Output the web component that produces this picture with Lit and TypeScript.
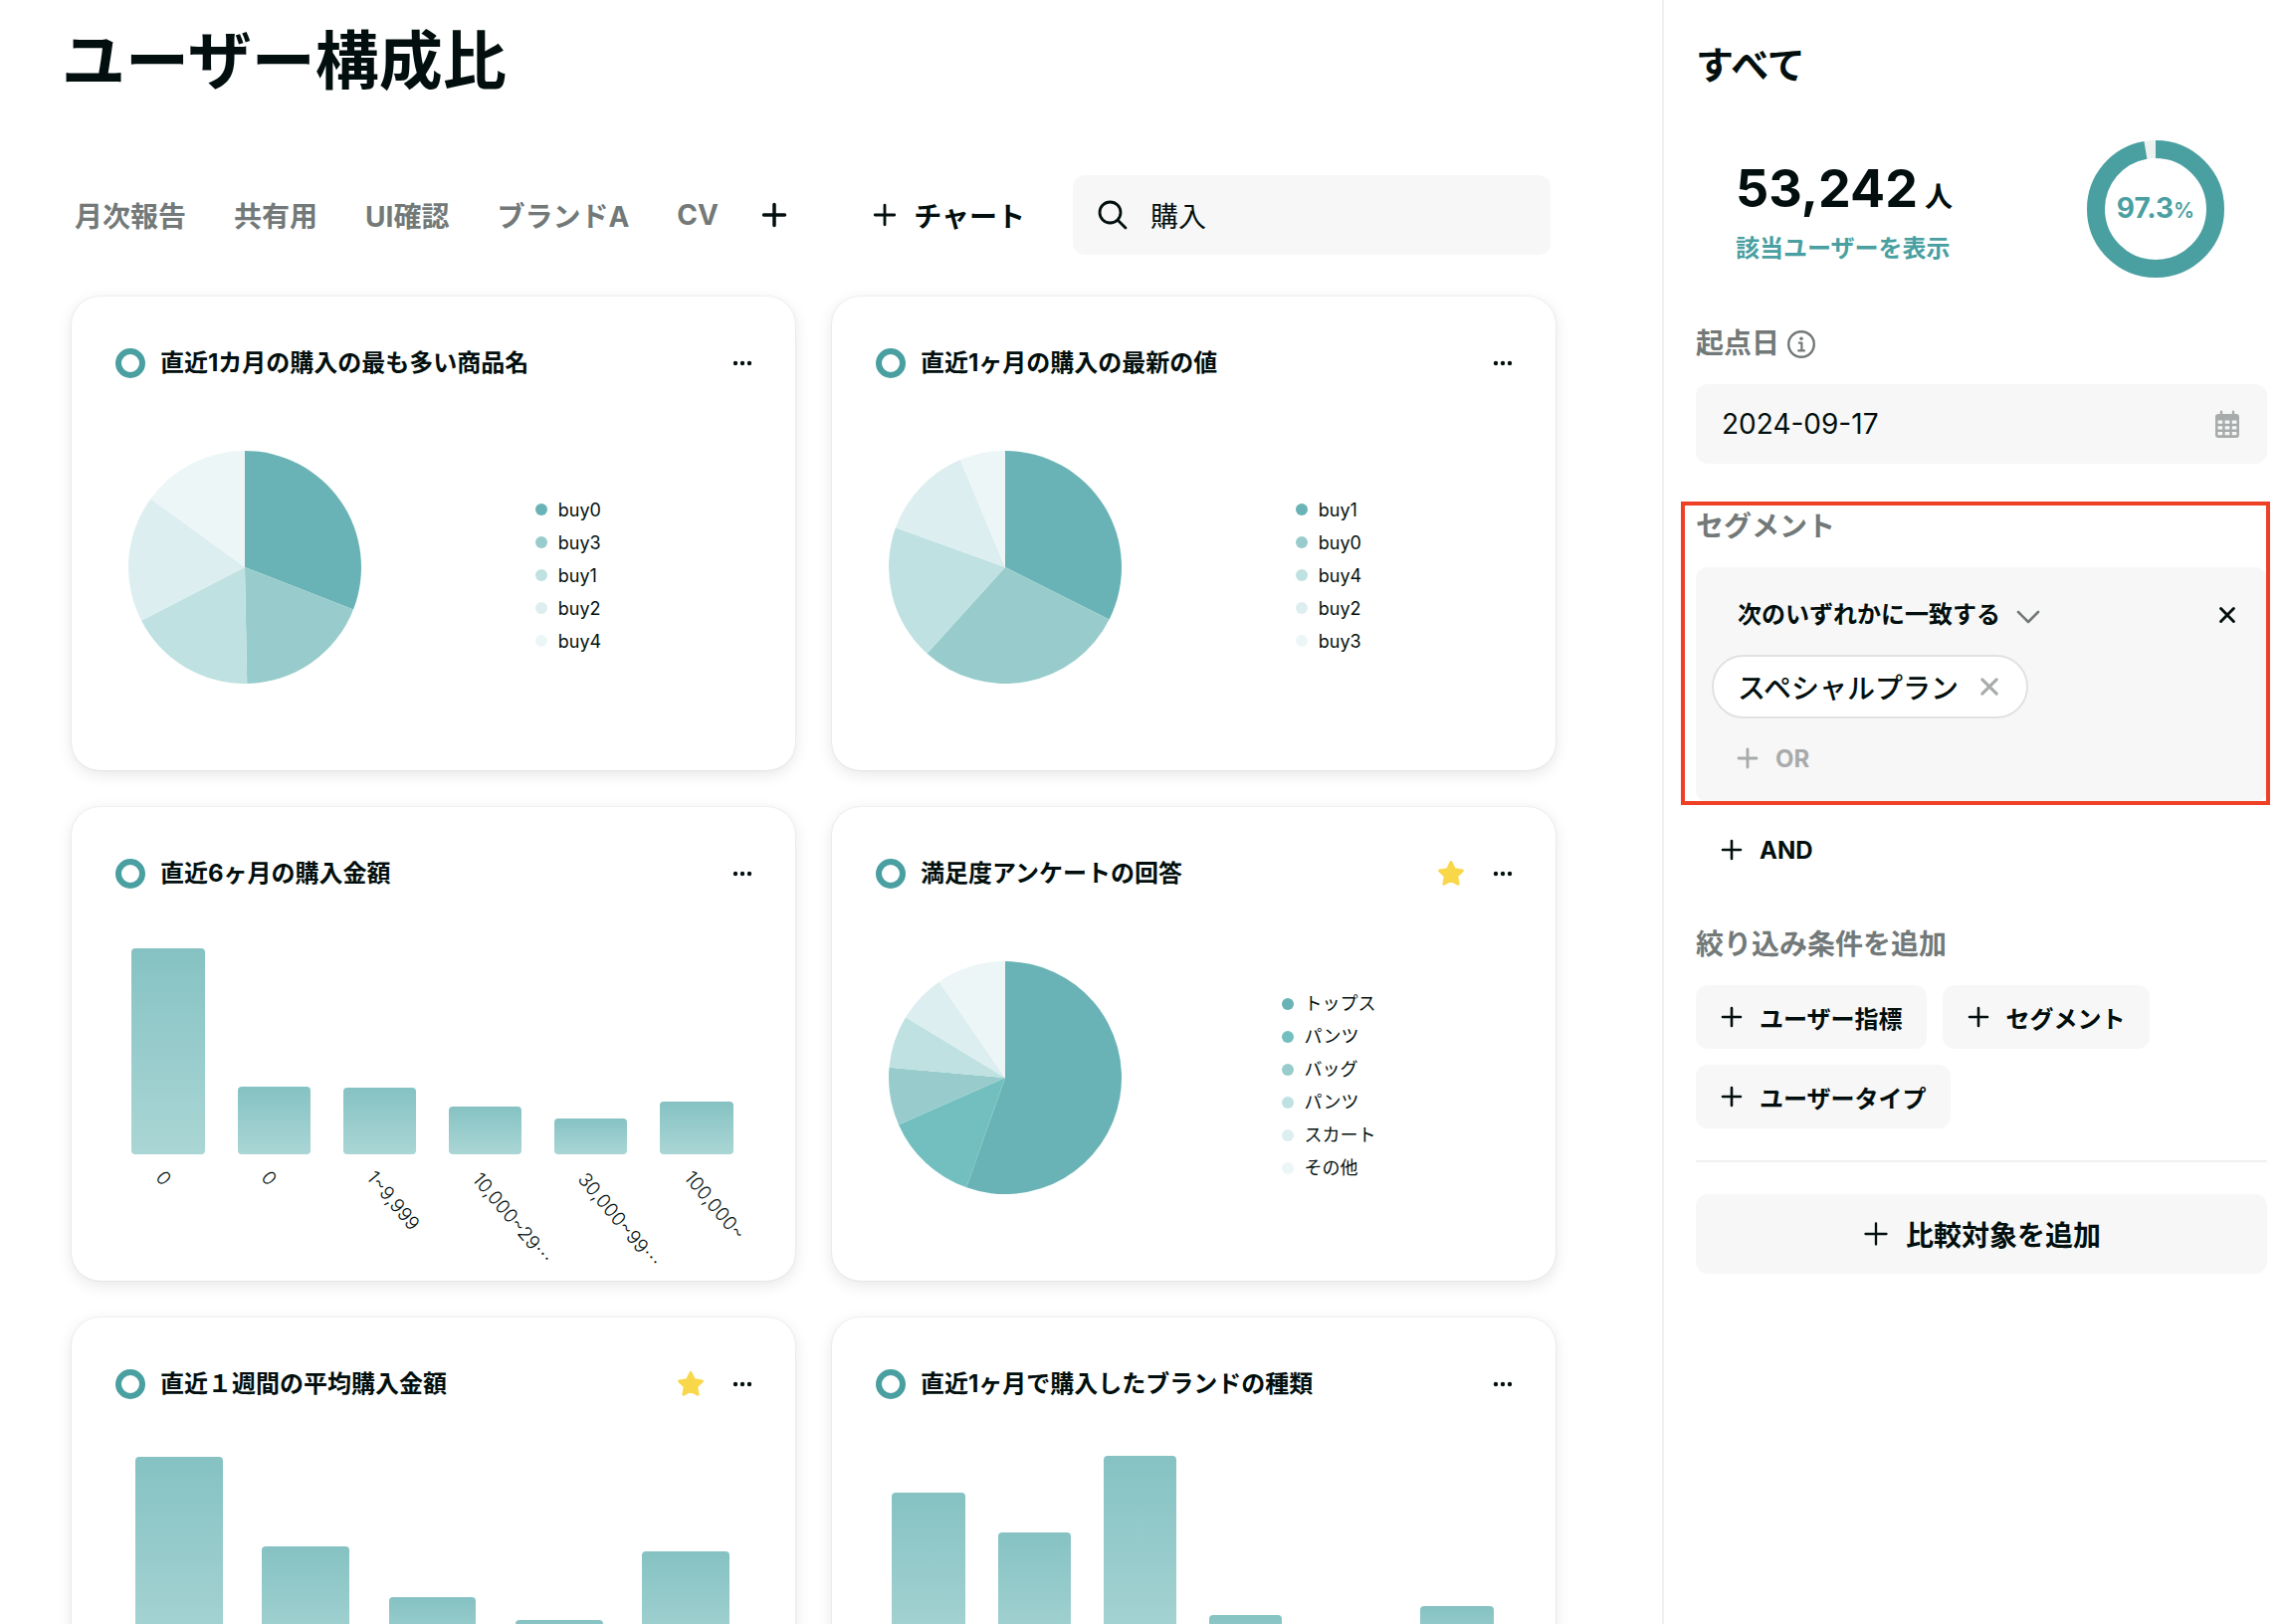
import { LitElement, html, svg, css, nothing } from "lit";
import { customElement, property } from "lit/decorators.js";

interface Slice {
  label: string;
  value: number;
  color: string;
}
interface Bar {
  label: string;
  value: number;
}
interface Chart {
  title: string;
  starred?: boolean;
  slices?: Slice[];
  bars?: Bar[];
}

const TEAL = ["#69b3b6", "#98cccc", "#bfe1e1", "#ddeef0", "#ecf6f7"];

const CHARTS: Chart[] = [
  {
    title: "直近1カ月の購入の最も多い商品名",
    slices: [
      { label: "buy0", value: 30.9, color: TEAL[0] },
      { label: "buy3", value: 18.8, color: TEAL[1] },
      { label: "buy1", value: 17.7, color: TEAL[2] },
      { label: "buy2", value: 17.6, color: TEAL[3] },
      { label: "buy4", value: 15, color: TEAL[4] },
    ],
  },
  {
    title: "直近1ヶ月の購入の最新の値",
    slices: [
      { label: "buy1", value: 32.4, color: TEAL[0] },
      { label: "buy0", value: 29.3, color: TEAL[1] },
      { label: "buy4", value: 18.8, color: TEAL[2] },
      { label: "buy2", value: 13.2, color: TEAL[3] },
      { label: "buy3", value: 6.3, color: TEAL[4] },
    ],
  },
  {
    title: "直近6ヶ月の購入金額",
    bars: [
      { label: "0", value: 207 },
      { label: "0", value: 68 },
      { label: "1~9,999", value: 67 },
      { label: "10,000~29…", value: 48 },
      { label: "30,000~99…", value: 36 },
      { label: "100,000~", value: 53 },
    ],
  },
  {
    title: "満足度アンケートの回答",
    starred: true,
    slices: [
      { label: "トップス", value: 55.4, color: TEAL[0] },
      { label: "パンツ", value: 13, color: "#73bfc0" },
      { label: "バッグ", value: 8, color: TEAL[1] },
      { label: "パンツ", value: 7.3, color: TEAL[2] },
      { label: "スカート", value: 6.7, color: TEAL[3] },
      { label: "その他", value: 9.6, color: TEAL[4] },
    ],
  },
  {
    title: "直近１週間の平均購入金額",
    starred: true,
    bars: [
      { label: "", value: 209 },
      { label: "", value: 119 },
      { label: "", value: 68 },
      { label: "", value: 45 },
      { label: "", value: 114 },
    ],
  },
  {
    title: "直近1ヶ月で購入したブランドの種類",
    bars: [
      { label: "", value: 173 },
      { label: "", value: 133 },
      { label: "", value: 210 },
      { label: "", value: 50 },
      { label: "", value: 30 },
      { label: "", value: 59 },
    ],
  },
];

const base = css`
  :host {
    box-sizing: border-box;
    font-family: Inter, "Noto Sans CJK JP", sans-serif;
    color: #020f0e;
  }
  *,
  *::before,
  *::after {
    box-sizing: border-box;
  }
  h1,
  h2,
  p,
  ul {
    margin: 0;
    padding: 0;
    list-style: none;
  }
  button,
  input,
  select {
    font: inherit;
    color: inherit;
    background: none;
    border: 0;
    margin: 0;
    padding: 0;
    outline: 0;
  }
  button {
    cursor: pointer;
  }
  svg {
    display: block;
    flex: none;
  }
`;

const plus = (size: number, width: number) => html`<svg
  width=${size}
  height=${size}
  viewBox="0 0 24 24"
  fill="none"
  stroke="currentColor"
  stroke-width=${width}
  stroke-linecap="round"
  aria-hidden="true"
>
  <path d="M12 3v18M3 12h18" />
</svg>`;

const cross = (size: number, width: number) => html`<svg
  width=${size}
  height=${size}
  viewBox="0 0 20 20"
  fill="none"
  stroke="currentColor"
  stroke-width=${width}
  stroke-linecap="round"
  aria-hidden="true"
>
  <path d="M2 2l16 16M18 2L2 18" />
</svg>`;

@customElement("pie-chart")
export class PieChart extends LitElement {
  @property({ attribute: false }) slices: Slice[] = [];

  static styles = [
    base,
    css`
      :host {
        display: flex;
        align-items: center;
        padding: 0 20px 0 57px;
      }
      .pie {
        width: 234px;
        height: 234px;
      }
      .legend {
        flex: 1;
        display: flex;
        justify-content: center;
        padding-top: 16px;
      }
      .item {
        display: flex;
        align-items: center;
        gap: 11px;
        font-size: 18px;
        line-height: 33px;
        height: 33px;
      }
      .dot {
        width: 12px;
        height: 12px;
      }
    `,
  ];

  render() {
    let sum = 0;
    const point = (v: number) => {
      const a = (v / 100) * Math.PI * 2;
      return `${(117 + 117 * Math.sin(a)).toFixed(2)} ${(117 - 117 * Math.cos(a)).toFixed(2)}`;
    };
    return html`
      <svg class="pie" viewBox="0 0 234 234" role="img" aria-hidden="true">
        ${this.slices.map((s) => {
          const from = point(sum);
          sum += s.value;
          return svg`<path fill=${s.color}
            d="M117 117L${from}A117 117 0 ${s.value > 50 ? 1 : 0} 1 ${point(sum)}Z"></path>`;
        })}
      </svg>
      <div class="legend">
        <ul>
          ${this.slices.map(
            (s) => html`<li class="item">
              <svg class="dot" viewBox="0 0 12 12" aria-hidden="true">
                <circle cx="6" cy="6" r="6" fill=${s.color} />
              </svg>
              ${s.label}
            </li>`
          )}
        </ul>
      </div>
    `;
  }
}

@customElement("bar-chart")
export class BarChart extends LitElement {
  @property({ attribute: false }) bars: Bar[] = [];

  static styles = [
    base,
    css`
      :host {
        display: flex;
        padding: 0 46px 0 44px;
      }
      .cell {
        flex: 1 1 0;
        min-width: 0;
        display: flex;
        flex-direction: column;
        align-items: center;
      }
      .plot {
        width: 100%;
        height: 210px;
        display: flex;
        align-items: flex-end;
        justify-content: center;
      }
      .bar {
        width: 69%;
        border-radius: 4px;
        background: linear-gradient(#86c2c3, #aad6d5);
      }
      .tick {
        width: 18px;
        height: 110px;
        padding-top: 8px;
      }
      .label {
        display: block;
        width: max-content;
        font-size: 19px;
        font-weight: 300;
        line-height: 24px;
        white-space: nowrap;
        transform: rotate(50deg);
        transform-origin: left center;
      }
      .more {
        font-family: "Noto Sans CJK JP", sans-serif;
      }
    `,
  ];

  render() {
    return this.bars.map(
      (b) => html`<div class="cell">
        <div class="plot"><div class="bar" style="height:${b.value}px"></div></div>
        <div class="tick">
          <span class="label"
            >${b.label.replace("…", "")}${b.label.endsWith("…")
              ? html`<span class="more">…</span>`
              : nothing}</span
          >
        </div>
      </div>`
    );
  }
}

@customElement("chart-card")
export class ChartCard extends LitElement {
  @property({ attribute: false }) chart!: Chart;

  static styles = [
    base,
    css`
      :host {
        display: flex;
        flex-direction: column;
        min-height: 476px;
        border-radius: 28px;
        background: #fff;
        box-shadow: 0 0 2px rgba(0, 0, 0, 0.12), 0 4px 16px rgba(0, 0, 0, 0.1);
      }
      .head {
        display: flex;
        align-items: center;
        gap: 15px;
        padding: 49px 41px 0 44px;
      }
      .ring {
        width: 30px;
        height: 30px;
        border: 6px solid #4a9fa1;
        border-radius: 50%;
      }
      .title {
        flex: 1;
        font-size: 24px;
        font-weight: 700;
        line-height: 36px;
      }
      .star,
      .menu {
        display: flex;
      }
      .star {
        margin-right: 11px;
      }
      .pie {
        padding-top: 70px;
      }
      .bars {
        padding-top: 54px;
      }
    `,
  ];

  render() {
    const c = this.chart;
    return html`
      <div class="head">
        <span class="ring"></span>
        <h2 class="title">${c.title}</h2>
        ${c.starred
          ? html`<button class="star" aria-label="お気に入り">
              <svg width="28" height="28" viewBox="0 0 28 28" aria-hidden="true">
                <path
                  fill="#f9d74b"
                  stroke="#f9d74b"
                  stroke-width="3"
                  stroke-linejoin="round"
                  d="M14 2.6l3.5 7.2 7.9 1.1-5.7 5.5 1.4 7.9-7.1-3.8-7.1 3.8 1.4-7.9-5.7-5.5 7.9-1.1z"
                />
              </svg>
            </button>`
          : nothing}
        <button class="menu" aria-label="メニュー">
          <svg width="24" height="24" viewBox="0 0 24 24" fill="currentColor" aria-hidden="true">
            <circle cx="5" cy="12" r="2.2" />
            <circle cx="12" cy="12" r="2.2" />
            <circle cx="19" cy="12" r="2.2" />
          </svg>
        </button>
      </div>
      ${c.slices
        ? html`<div class="pie"><pie-chart .slices=${c.slices}></pie-chart></div>`
        : html`<div class="bars"><bar-chart .bars=${c.bars ?? []}></bar-chart></div>`}
    `;
  }
}

@customElement("filter-panel")
export class FilterPanel extends LitElement {
  static styles = [
    base,
    css`
      :host {
        display: block;
        padding: 38px 16px 38px 32px;
        border-left: 2px solid #eff0f0;
      }
      .heading {
        font-size: 38px;
        font-weight: 700;
        line-height: 54px;
      }
      .stats {
        display: flex;
        align-items: center;
        justify-content: space-between;
        margin: 49px 43px 45px 40px;
      }
      .total {
        padding-top: 6px;
      }
      .count {
        display: flex;
        align-items: baseline;
        gap: 7px;
        font-size: 52px;
        font-weight: 700;
        line-height: 64px;
      }
      .unit {
        font-size: 28px;
        font-weight: 600;
      }
      .link {
        display: block;
        font-size: 24px;
        font-weight: 700;
        line-height: 36px;
        margin-top: 2px;
        color: #4a9fa1;
        text-decoration: none;
      }
      .donut {
        display: grid;
        place-items: center;
        color: #4a9fa1;
      }
      .donut > * {
        grid-area: 1 / 1;
      }
      .rate {
        font-size: 28px;
        font-weight: 700;
        line-height: 36px;
      }
      .percent {
        font-size: 21px;
        font-weight: 600;
      }
      .section {
        position: relative;
        margin-bottom: 42px;
      }
      .label {
        display: flex;
        align-items: center;
        gap: 7px;
        margin-bottom: 20px;
        font-size: 28px;
        font-weight: 700;
        line-height: 42px;
        color: #727978;
      }
      .field {
        display: flex;
        align-items: center;
        height: 80px;
        padding: 0 26px;
        border-radius: 12px;
        background: #f7f7f7;
        color: #a8abab;
      }
      .date {
        flex: 1;
        min-width: 0;
        font-size: 28px;
        line-height: 40px;
        color: #020f0e;
      }
      .annotated {
        margin-bottom: 16px;
      }
      .annotation {
        position: absolute;
        inset: -4px -3px -3px -15px;
        border: 4px solid #ee4024;
        pointer-events: none;
      }
      .group {
        display: flex;
        flex-direction: column;
        align-items: flex-start;
        gap: 8px;
        padding: 16px 16px 12px;
        border-radius: 12px;
        background: #f7f7f7;
      }
      .rule {
        align-self: stretch;
        display: flex;
        align-items: center;
        height: 64px;
        padding: 0 16px 0 26px;
        gap: 14px;
      }
      .match {
        appearance: none;
        font-size: 24px;
        font-weight: 700;
        line-height: 36px;
      }
      .chevron {
        color: #727978;
      }
      .remove {
        display: flex;
        margin-left: auto;
      }
      .tag {
        display: flex;
        align-items: center;
        gap: 22px;
        height: 64px;
        padding: 0 28px 0 24px;
        border: 2px solid #e0e2e2;
        border-radius: 32px;
        background: #fff;
        font-size: 28px;
        font-weight: 500;
      }
      .clear {
        display: flex;
        color: #a8abab;
      }
      .add {
        display: flex;
        align-items: center;
        gap: 16px;
        height: 64px;
        padding: 0 24px;
        font-size: 24px;
        font-weight: 700;
      }
      .muted {
        color: #a8abab;
      }
      .filled {
        border-radius: 12px;
        background: #f7f7f7;
      }
      .chips {
        display: flex;
        flex-wrap: wrap;
        gap: 16px;
      }
      .compare {
        width: 100%;
        height: 80px;
        justify-content: center;
        font-size: 28px;
      }
      .filters {
        padding-bottom: 32px;
        margin-bottom: 32px;
        border-bottom: 2px solid #eff0f0;
      }
      .and {
        margin-bottom: 42px;
      }
    `,
  ];

  render() {
    return html`
      <h2 class="heading">すべて</h2>
      <div class="stats">
        <div class="total">
          <p class="count">53,242<span class="unit">人</span></p>
          <a class="link" href="#users">該当ユーザーを表示</a>
        </div>
        <div class="donut">
          <svg width="138" height="138" viewBox="0 0 138 138" fill="none" stroke-width="18" aria-hidden="true">
            <circle cx="69" cy="69" r="60" stroke="#eff1f1" />
            <circle
              cx="69"
              cy="69"
              r="60"
              stroke="#4a9fa1"
              pathLength="100"
              stroke-dasharray="97.3 2.7"
              transform="rotate(-90 69 69)"
            />
          </svg>
          <span class="rate">97.3<span class="percent">%</span></span>
        </div>
      </div>

      <div class="section">
        <div class="label">
          <label for="date">起点日</label>
          <svg width="30" height="30" viewBox="0 0 30 30" fill="none" stroke="currentColor" aria-hidden="true">
            <circle cx="15" cy="16" r="12.8" stroke-width="2.4" />
            <circle cx="15" cy="10.2" r="1.8" fill="currentColor" stroke="none" />
            <path d="M12.8 14.6h2.6v7.4M12.2 22.4h5.8" stroke-width="2.2" stroke-linecap="round" stroke-linejoin="round" />
          </svg>
        </div>
        <div class="field">
          <input class="date" id="date" type="text" value="2024-09-17" />
          <svg width="28" height="28" viewBox="0 0 28 28" aria-hidden="true">
            <path
              fill="currentColor"
              fill-rule="evenodd"
              d="M8 .5a1.2 1.2 0 0 1 1.2 1.2V4h9.6V1.7a1.2 1.2 0 0 1 2.4 0V4H23a3 3 0 0 1 3 3v18a3 3 0 0 1-3 3H5a3 3 0 0 1-3-3V7a3 3 0 0 1 3-3h1.8V1.7A1.2 1.2 0 0 1 8 .5zM4.6 10.5v3.3h4.6v-3.3zm7.1 0v3.3h4.6v-3.3zm7.1 0v3.3h4.6v-3.3zM4.6 16.2v3.3h4.6v-3.3zm7.1 0v3.3h4.6v-3.3zm7.1 0v3.3h4.6v-3.3zM4.6 22v3.3h4.6V22zm7.1 0v3.3h4.6V22zm7.1 0v3.3h4.6V22z"
            />
          </svg>
        </div>
      </div>

      <div class="section annotated">
        <h2 class="label">セグメント</h2>
        <div class="group">
          <div class="rule">
            <select class="match" aria-label="一致条件">
              <option>次のいずれかに一致する</option>
            </select>
            <svg class="chevron" width="28" height="28" viewBox="0 0 28 28" fill="none" stroke="currentColor" stroke-width="2.6" stroke-linecap="round" stroke-linejoin="round" aria-hidden="true">
              <path d="M4 11l10 10 10-10" />
            </svg>
            <button class="remove" aria-label="条件を削除">${cross(16, 3.6)}</button>
          </div>
          <div class="tag">
            スペシャルプラン
            <button class="clear" aria-label="スペシャルプランを外す">${cross(18, 3.4)}</button>
          </div>
          <button class="add muted">${plus(24, 2.8)}OR</button>
        </div>
        <div class="annotation"></div>
      </div>
      <button class="add and">${plus(24, 2.6)}AND</button>

      <div class="filters">
        <h2 class="label">絞り込み条件を追加</h2>
        <div class="chips">
          ${["ユーザー指標", "セグメント", "ユーザータイプ"].map(
            (t) => html`<button class="add filled">${plus(24, 2.6)}${t}</button>`
          )}
        </div>
      </div>
      <button class="add filled compare">${plus(28, 2)}比較対象を追加</button>
    `;
  }
}

@customElement("app-root")
export class AppRoot extends LitElement {
  static styles = [
    base,
    css`
      :host {
        display: grid;
        grid-template-columns: minmax(0, 1fr) 624px;
        height: 100vh;
        overflow: hidden;
        background: #fff;
      }
      .main {
        padding: 16px 107px 36px 62px;
        overflow-y: auto;
        scrollbar-width: none;
      }
      .panel {
        overflow-y: auto;
        scrollbar-width: none;
      }
      .title {
        font-size: 64px;
        font-weight: 700;
        line-height: 90px;
      }
      .toolbar {
        display: flex;
        align-items: center;
        gap: 48px;
        margin: 70px 5px 42px 13px;
        font-size: 28px;
        font-weight: 700;
      }
      .tabs {
        display: flex;
        align-items: center;
        gap: 42px;
      }
      .tab {
        margin-right: 6px;
        color: #727978;
        white-space: nowrap;
      }
      .tab:nth-last-child(2) {
        margin-right: 0;
      }
      .new {
        display: flex;
      }
      .add {
        display: flex;
        align-items: center;
        gap: 16px;
        margin-left: auto;
        white-space: nowrap;
      }
      .search {
        display: flex;
        align-items: center;
        gap: 22px;
        width: 480px;
        height: 80px;
        padding: 0 26px 0 24px;
        border-radius: 12px;
        background: #f7f7f7;
        font-weight: 400;
      }
      .query {
        flex: 1;
        min-width: 0;
      }
      .cards {
        display: grid;
        grid-template-columns: repeat(2, minmax(0, 1fr));
        gap: 37px;
        margin-left: 10px;
      }
    `,
  ];

  render() {
    return html`
      <main class="main">
        <h1 class="title">ユーザー構成比</h1>
        <div class="toolbar">
          <nav class="tabs">
            ${["月次報告", "共有用", "UI確認", "ブランドA", "CV"].map(
              (t) => html`<button class="tab">${t}</button>`
            )}
            <button class="new" aria-label="タブを追加">${plus(28, 3)}</button>
          </nav>
          <button class="add">${plus(26, 2.6)}チャート</button>
          <label class="search">
            <svg width="32" height="32" viewBox="0 0 32 32" fill="none" stroke="currentColor" stroke-width="2.8" stroke-linecap="round" aria-hidden="true">
              <circle cx="13.5" cy="13.5" r="10.5" />
              <path d="M21.2 21.2L29 29" />
            </svg>
            <input class="query" type="text" aria-label="検索" value="購入" />
          </label>
        </div>
        <div class="cards">
          ${CHARTS.map((c) => html`<chart-card .chart=${c}></chart-card>`)}
        </div>
      </main>
      <filter-panel class="panel"></filter-panel>
    `;
  }
}
